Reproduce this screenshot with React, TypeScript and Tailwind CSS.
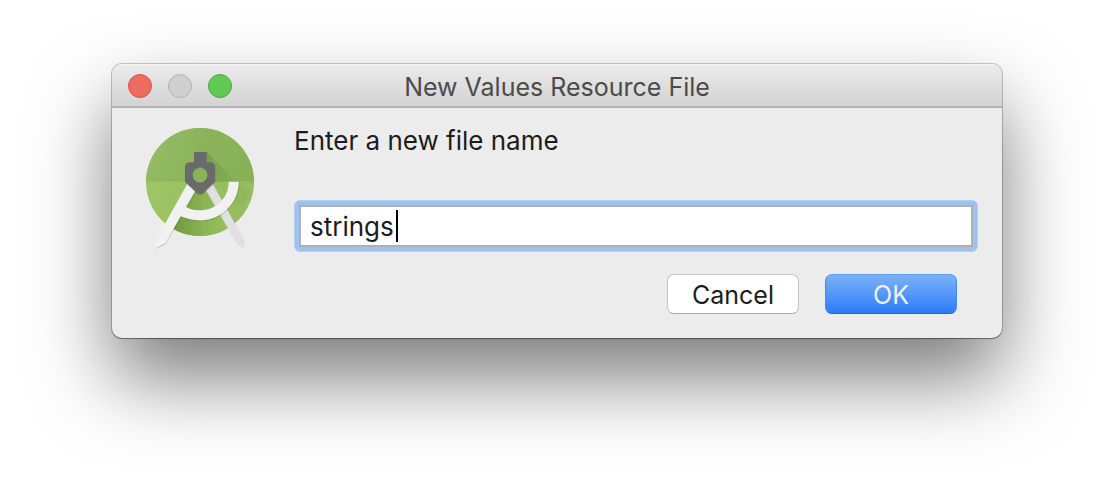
import React, { useState } from 'react';

function StudioLogo() {
  return (
    <svg className="h-[121px] w-[108px] shrink-0" viewBox="33 30 324 363" role="img" aria-label="Android Studio">
      <defs>
        <clipPath id="disc">
          <circle cx="195" cy="192" r="162" />
        </clipPath>
        <linearGradient id="cast" x1="215" y1="100" x2="320" y2="205" gradientUnits="userSpaceOnUse">
          <stop offset="0" stopColor="#769f4b" />
          <stop offset="1" stopColor="#88b056" />
        </linearGradient>
        <linearGradient id="upper" x1="33" y1="60" x2="357" y2="160" gradientUnits="userSpaceOnUse">
          <stop offset="0" stopColor="#96bc67" />
          <stop offset="0.5" stopColor="#8bb45a" />
          <stop offset="1" stopColor="#89b057" />
        </linearGradient>
        <linearGradient id="lower" x1="33" y1="191" x2="357" y2="300" gradientUnits="userSpaceOnUse">
          <stop offset="0" stopColor="#9ec665" />
          <stop offset="1" stopColor="#94bc5c" />
        </linearGradient>
        <linearGradient id="inner" x1="125" y1="0" x2="275" y2="0" gradientUnits="userSpaceOnUse">
          <stop offset="0" stopColor="#769b48" />
          <stop offset="0.55" stopColor="#8bb453" />
          <stop offset="1" stopColor="#96c05e" />
        </linearGradient>
        <filter id="soft" x="-20%" y="-20%" width="140%" height="140%">
          <feDropShadow dx="1" dy="3" stdDeviation="2" floodColor="#34451f" floodOpacity="0.28" />
        </filter>
      </defs>
      <g clipPath="url(#disc)">
        <rect x="33" y="28" width="324" height="330" fill="url(#lower)" />
        <rect x="33" y="28" width="324" height="163" fill="url(#upper)" />
        <path d="M215 102 L304 191 H238 V145 L215 130 Z" fill="url(#cast)" />
        <path d="M311 191 L343 223 L325 262 L300 262 Z" fill="#90b858" />
        <path d="M178 214 L212 214 L275 305 C300 320 265 355 195 355 C140 355 115 335 115 335 Z" fill="url(#inner)" />
      </g>
      <path d="M211 213 L233 198 L327 365 V389 L306 377 Z" fill="#e0e0e0" stroke="#d3d3d3" strokeWidth="1" />
      <g filter="url(#soft)">
        <path
          d="M158 196 L181 219 L153 267 C162 273 177 277 193 277 C243 277 281 240 281 191 H311 C311 255 259 307 193 307 C172 307 152 302 137 295 L90 376 L63 389 V365 Z"
          fill="#f1f1f1"
        />
      </g>
      <path
        d="M177 102 H215 V133 H226 Q240 135 240 148 V191 L204 225 Q195 231 186 225 L150 191 V148 Q150 135 164 133 H177 Z M195 148 A22.500 22.500 0 1 0 195 193 A22.500 22.500 0 1 0 195 148 Z"
        fill="#6b6b6b"
        fillRule="evenodd"
        filter="url(#soft)"
      />
    </svg>
  );
}

export default function App() {
  const [name, setName] = useState('strings');

  return (
    <main className="bg-white px-28 pt-16 pb-40 font-['Inter','Liberation_Sans',sans-serif] text-[25px] leading-[26px] text-[#1c1c1c]">
      <section
        role="dialog"
        aria-labelledby="dialog-title"
        className="overflow-hidden rounded-[10px] bg-[#ececec] shadow-[0_0_0_1px_rgba(0,0,0,0.2),0_1px_1px_rgba(0,0,0,0.3),0_40px_80px_rgba(0,0,0,0.52)]"
      >
        <header className="grid h-11 grid-cols-[1fr_auto_1fr] items-center border-t border-b-2 border-t-[#f5f5f5] border-b-[#b4b4b4] bg-linear-to-b from-[#ebebeb] to-[#d3d3d3] px-4">
          <div className="flex gap-4">
            <button type="button" aria-label="Close" className="size-6 rounded-full border border-[#dc5248] bg-[#ee6b60]" />
            <button type="button" aria-label="Minimize" disabled className="size-6 rounded-full border border-[#b1b1b1] bg-[#cfcfcf]" />
            <button type="button" aria-label="Zoom" className="size-6 rounded-full border border-[#48a83c] bg-[#61c955]" />
          </div>
          <h1 id="dialog-title" className="pt-0.5 text-[#4b4b4b]">New Values Resource File</h1>
        </header>

        <form className="flex gap-10 pt-5 pr-6 pb-6 pl-[34px]" onSubmit={(e) => e.preventDefault()}>
          <StudioLogo />
          <div className="min-w-0 flex-1">
            <label htmlFor="file-name" className="block text-[26px]">Enter a new file name</label>
            <div className="relative mt-[46px] rounded-[6px] border border-[#b4cef0] bg-[#9dc1f0] p-1">
              <input
                id="file-name"
                type="text"
                value={name}
                onChange={(e) => setName(e.target.value)}
                className="block h-[42px] w-full border-2 border-[#b1b1b1] bg-white px-[9px] text-[26px] caret-transparent outline-none focus:caret-black"
              />
              {name === 'strings' && <span aria-hidden="true" className="absolute top-[9px] left-[101px] h-8 w-0.5 bg-black" />}
            </div>
            <div className="mt-[22px] flex justify-end gap-[26px] pr-[21px]">
              <button type="button" className="h-10 w-[132px] rounded-[7px] border border-[#c6c6c6] border-b-[#acacac] bg-white pt-0.5">
                Cancel
              </button>
              <button
                type="submit"
                className="h-10 w-[132px] rounded-[7px] border border-t-[#5c9ff0] border-r-[#468bf0] border-b-[#1c60ee] border-l-[#468bf0] bg-linear-to-b from-[#7ab1f6] to-[#2c7bf8] pt-0.5 text-[#f0f2f6]"
              >
                OK
              </button>
            </div>
          </div>
        </form>
      </section>
    </main>
  );
}
